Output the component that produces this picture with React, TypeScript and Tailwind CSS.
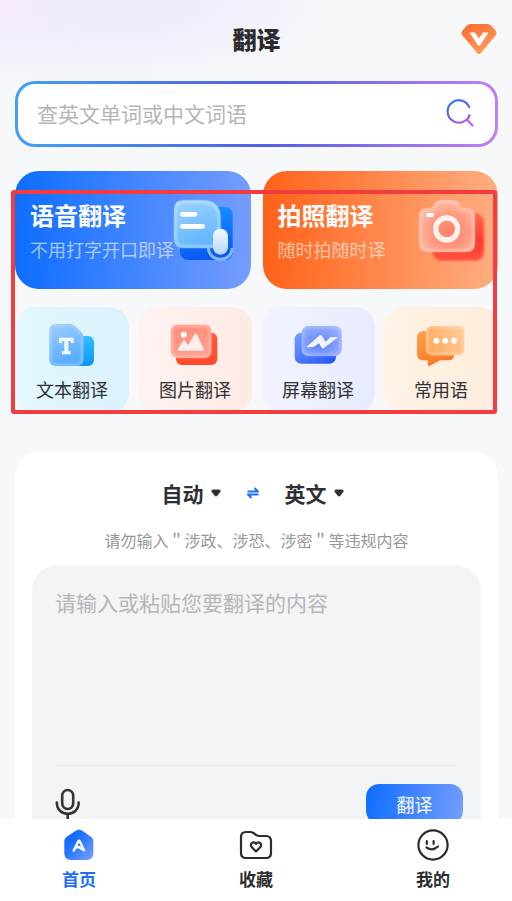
import type { ReactNode } from "react";

const cardTitle = "text-[24px] leading-8 font-bold text-white";

function GradientDefs() {
  return (
    <svg width="0" height="0" className="absolute" aria-hidden="true">
      <defs>
        <filter id="soft" x="-10%" y="-10%" width="120%" height="120%">
          <feGaussianBlur stdDeviation="3" />
        </filter>
        <linearGradient id="gem" x1="0" y1="0" x2="0.5" y2="1">
          <stop offset="0" stopColor="#f9692c" />
          <stop offset="1" stopColor="#ff9c5c" />
        </linearGradient>
        <linearGradient id="search" gradientUnits="userSpaceOnUse" x1="6" y1="2" x2="20" y2="26">
          <stop offset="0" stopColor="#2a7bea" />
          <stop offset="0.5" stopColor="#6a63ea" />
          <stop offset="1" stopColor="#c267e0" />
        </linearGradient>
        <linearGradient id="voiceBack" x1="0.4" y1="0" x2="0.6" y2="1">
          <stop offset="0" stopColor="#1493ff" />
          <stop offset="1" stopColor="#0b55f2" />
        </linearGradient>
        <linearGradient id="voiceFront" x1="0" y1="0" x2="0.3" y2="1">
          <stop offset="0" stopColor="#9fd4ff" />
          <stop offset="1" stopColor="#62b6fe" />
        </linearGradient>
        <linearGradient id="micFill" x1="0" y1="0" x2="0" y2="1">
          <stop offset="0" stopColor="#f4faff" />
          <stop offset="1" stopColor="#b4d6ff" />
        </linearGradient>
        <linearGradient id="camBack" x1="0.5" y1="0" x2="0.5" y2="1">
          <stop offset="0" stopColor="#ff6a4c" />
          <stop offset="0.6" stopColor="#ff3a30" />
          <stop offset="1" stopColor="#ff5440" />
        </linearGradient>
        <radialGradient id="camFront" cx="0.55" cy="0.62" r="0.65">
          <stop offset="0" stopColor="#ff7d66" />
          <stop offset="0.55" stopColor="#ff9c84" />
          <stop offset="1" stopColor="#ffbea6" />
        </radialGradient>
        <linearGradient id="docBack" x1="0" y1="0" x2="0" y2="1">
          <stop offset="0" stopColor="#35bdff" />
          <stop offset="1" stopColor="#0a93fb" />
        </linearGradient>
        <linearGradient id="docFront" x1="0" y1="0" x2="0.3" y2="1">
          <stop offset="0" stopColor="#a3cbff" />
          <stop offset="1" stopColor="#56adff" />
        </linearGradient>
        <linearGradient id="imgBack" x1="0" y1="0" x2="0" y2="1">
          <stop offset="0" stopColor="#ff5b38" />
          <stop offset="1" stopColor="#fb4a2b" />
        </linearGradient>
        <linearGradient id="imgFront" x1="0" y1="0" x2="0.3" y2="1">
          <stop offset="0" stopColor="#ff8a79" />
          <stop offset="1" stopColor="#ff9f8f" />
        </linearGradient>
        <linearGradient id="scrBack" x1="0" y1="0" x2="1" y2="1">
          <stop offset="0" stopColor="#7a9cfb" />
          <stop offset="1" stopColor="#1f55f5" />
        </linearGradient>
        <radialGradient id="scrFront" cx="0.45" cy="0.6" r="0.75">
          <stop offset="0" stopColor="#5d83fb" />
          <stop offset="1" stopColor="#a0b6fd" />
        </radialGradient>
        <linearGradient id="chatBack" x1="0" y1="0" x2="0.6" y2="1">
          <stop offset="0" stopColor="#ffa04c" />
          <stop offset="1" stopColor="#fb7722" />
        </linearGradient>
        <linearGradient id="chatFront" x1="0" y1="0.6" x2="1" y2="0.2">
          <stop offset="0" stopColor="#ffab62" />
          <stop offset="1" stopColor="#ffcb98" />
        </linearGradient>
        <linearGradient id="home" x1="0.3" y1="0.3" x2="1" y2="1">
          <stop offset="0" stopColor="#146dff" />
          <stop offset="1" stopColor="#7aa0ff" />
        </linearGradient>
      </defs>
    </svg>
  );
}

function VoiceIcon() {
  return (
    <svg viewBox="516 117 192 192" className="size-16 shrink-0" aria-hidden="true">
      <rect x="540" y="141" width="158" height="159" rx="24" fill="url(#voiceBack)" />
      <path
        d="M550 121H607Q662 121 662 176V236Q662 264 634 264H550Q522 264 522 236V149Q522 121 550 121Z"
        fill="url(#voiceFront)"
      />
      <path
        d="M551 126H607Q657 126 657 176V235Q657 259 633 259H551Q527 259 527 235V150Q527 126 551 126Z"
        fill="none"
        stroke="#c6e6ff"
        strokeWidth="7"
        strokeOpacity="0.7"
        filter="url(#soft)"
      />
      <path d="M547 163H585M547 199H608" stroke="#fff" strokeWidth="14" strokeLinecap="round" />
      <path d="M625 264A36 34 0 0 0 697 264" fill="none" stroke="#83bcff" strokeWidth="9" />
      <rect x="639" y="206" width="45" height="78" rx="22" fill="url(#micFill)" />
    </svg>
  );
}

function CameraIcon() {
  return (
    <svg viewBox="489 117 192 192" className="size-16 shrink-0 overflow-visible" aria-hidden="true">
      <rect x="530" y="160" width="154" height="142" rx="26" fill="url(#camBack)" filter="url(#soft)" />
      <path
        d="M515 144H522Q530 144 535 132Q541 120 556 120H590Q604 120 610 132Q616 144 623 144H631Q657 144 657 170V250Q657 276 631 276H515Q489 276 489 250V170Q489 144 515 144Z"
        fill="url(#camFront)"
      />
      <path
        d="M518 149H526Q534 149 540 137Q545 125 558 125H588Q600 125 606 137Q611 149 620 149H628Q652 149 652 173V247Q652 271 628 271H518Q494 271 494 247V173Q494 149 518 149Z"
        fill="none"
        stroke="#ffd0bf"
        strokeWidth="7"
        strokeOpacity="0.6"
        filter="url(#soft)"
      />
      <rect x="510" y="159" width="24" height="12" rx="5" fill="#fff" />
      <circle cx="572" cy="207" r="33" fill="none" stroke="#fff3ee" strokeWidth="16" />
    </svg>
  );
}

function TextIcon() {
  return (
    <svg viewBox="144 84 144 132" className="h-11 w-12" aria-hidden="true">
      <rect x="186" y="123" width="96" height="90" rx="18" fill="url(#docBack)" />
      <path
        d="M168 87H210Q218 87 224 93L243 110Q250 116 250 125V192Q250 213 229 213H168Q148 213 148 192V108Q148 87 168 87Z"
        fill="url(#docFront)"
      />
      <path
        d="M170 91H209Q216 91 221 96L240 113Q246 118 246 126V190Q246 209 227 209H171Q152 209 152 190V110Q152 91 170 91Z"
        fill="none"
        stroke="#b4daff"
        strokeWidth="6"
        strokeOpacity="0.6"
        filter="url(#soft)"
      />
      <path d="M177 128H221V144H213V138H205V168H212V178H186V168H193V138H185V144H177Z" fill="#f2f9ff" />
    </svg>
  );
}

function ImageIcon() {
  return (
    <svg viewBox="513 84 144 132" className="h-11 w-12 overflow-visible" aria-hidden="true">
      <rect x="528" y="113" width="124" height="97" rx="18" fill="url(#imgBack)" />
      <rect x="513" y="89" width="121" height="100" rx="20" fill="url(#imgFront)" />
      <rect x="517" y="93" width="113" height="92" rx="17" fill="none" stroke="#ffc9c0" strokeWidth="6" strokeOpacity="0.7" filter="url(#soft)" />
      <circle cx="551" cy="119" r="9" fill="#fff" />
      <path
        d="M534 162L549 138Q552 134 555 138L565 151L583 118Q587 113 591 118L611 162Q613 167 607 167H537Q531 167 534 162Z"
        fill="#ffeeea"
      />
    </svg>
  );
}

function ScreenIcon() {
  return (
    <svg viewBox="112 84 144 132" className="h-11 w-12" aria-hidden="true">
      <rect x="114" y="113" width="124" height="93" rx="20" fill="url(#scrBack)" />
      <rect x="135" y="93" width="120" height="90" rx="20" fill="url(#scrFront)" />
      <rect x="139" y="97" width="112" height="82" rx="17" fill="none" stroke="#b9c9ff" strokeWidth="6" strokeOpacity="0.6" filter="url(#soft)" />
      <path d="M148 157L189 121H195L207 140L222 126H245L201 160H196L187 145L170 156Z" fill="#f0f4ff" />
    </svg>
  );
}

function PhraseIcon() {
  return (
    <svg viewBox="483 84 144 132" className="h-11 w-12" aria-hidden="true">
      <path
        d="M503 108H575Q595 108 595 128V176Q595 196 575 196H552L522 212Q515 215 515 208V196H503Q483 196 483 176V128Q483 108 503 108Z"
        fill="url(#chatBack)"
      />
      <rect x="510" y="93" width="115" height="88" rx="18" fill="url(#chatFront)" />
      <rect x="514" y="97" width="107" height="80" rx="15" fill="none" stroke="#ffdcb8" strokeWidth="6" strokeOpacity="0.6" filter="url(#soft)" />
      <circle cx="541" cy="137" r="9" fill="#fff" />
      <circle cx="568" cy="137" r="9" fill="#fff" />
      <circle cx="594" cy="137" r="9" fill="#fff" />
    </svg>
  );
}

function HomeIcon() {
  return (
    <svg viewBox="188 234 102 102" className="size-[34px]" aria-hidden="true">
      <path
        d="M228 243Q239 236 250 243L275 260Q282 265 282 274V310Q282 330 262 330H215Q195 330 195 310V274Q195 265 202 260Z"
        fill="url(#home)"
      />
      <path
        d="M223 302L237 274Q239 270 241 274L254 301L238 291L230 293"
        fill="none"
        stroke="#fff"
        strokeWidth="7"
        strokeLinecap="round"
        strokeLinejoin="round"
      />
    </svg>
  );
}

function FavoriteIcon() {
  return (
    <svg
      viewBox="0 0 34 34"
      className="size-[34px]"
      fill="none"
      stroke="#2b2c30"
      strokeWidth="2.2"
      strokeLinecap="round"
      strokeLinejoin="round"
      aria-hidden="true"
    >
      <path d="M7 4H11Q13 4 14.500 5L17 6.800Q18.500 8 20.500 8H27Q32 8 32 13V25Q32 30 27 30H7Q2 30 2 25V9Q2 4 7 4Z" />
      <path d="M17 23.500L12.800 19.200Q11 17 12.800 15Q15 13.300 17 15.800Q19 13.300 21.200 15Q23 17 21.200 19.200Z" />
    </svg>
  );
}

function MineIcon() {
  return (
    <svg
      viewBox="0 0 34 34"
      className="size-[34px]"
      fill="none"
      stroke="#2b2c30"
      strokeWidth="2.2"
      strokeLinecap="round"
      aria-hidden="true"
    >
      <circle cx="17" cy="17" r="14.600" />
      <path d="M10.800 13.200V16M17.600 13.200V16M10.500 19.500Q16.500 23.500 22 18.500" />
    </svg>
  );
}

function Caret() {
  return (
    <svg viewBox="0 0 10 8" className="h-2 w-[10px]" aria-hidden="true">
      <path d="M2 0.500H8Q10.200 0.800 9.300 3L6.300 6.800Q5 8 3.700 6.800L0.700 3Q-0.200 0.800 2 0.500Z" fill="#2f3033" />
    </svg>
  );
}

function FeatureCard({ title, text, tone, icon }: { title: string; text: string; tone: string; icon: ReactNode }) {
  return (
    <button type="button" className={`flex h-[118px] items-start rounded-3xl pt-7 pr-[15px] pl-[15px] text-left ${tone}`}>
      <span className="flex min-w-0 flex-1 flex-col gap-1 whitespace-nowrap">
        <span className={cardTitle}>{title}</span>
        <span className="text-[18px] leading-7 text-white/60">{text}</span>
      </span>
      {icon}
    </button>
  );
}

function Tile({ label, tone, icon }: { label: string; tone: string; icon: ReactNode }) {
  return (
    <button type="button" className={`flex h-[106px] flex-col items-center gap-2 rounded-[20px] pt-4 ${tone}`}>
      {icon}
      <span className="text-[18px] leading-7 whitespace-nowrap text-[#303236]">{label}</span>
    </button>
  );
}

function LanguageSelect({ label, options }: { label: string; options: string[] }) {
  return (
    <label className="relative flex items-center">
      <select
        aria-label={label}
        className="w-[59px] appearance-none bg-transparent text-[21px] leading-8 font-bold text-[#2f3033] outline-none"
      >
        {options.map((option) => (
          <option key={option}>{option}</option>
        ))}
      </select>
      <span className="pointer-events-none absolute right-0">
        <Caret />
      </span>
    </label>
  );
}

function NavItem({ label, icon, active = false }: { label: string; icon: ReactNode; active?: boolean }) {
  return (
    <a
      href="#"
      aria-current={active ? "page" : undefined}
      className={`flex w-[54px] flex-col items-center gap-[5px] text-[17px] leading-6 font-bold ${active ? "text-[#1c6ff5]" : "text-[#2b2c30]"}`}
    >
      {icon}
      {label}
    </a>
  );
}

export default function App() {
  return (
    <div className="flex h-screen flex-col overflow-hidden bg-[#f6f8fa] bg-[radial-gradient(ellipse_150px_90px_at_0%_0%,#f6ebfb,transparent),radial-gradient(ellipse_260px_90px_at_20%_0%,#eae9fb,transparent)] font-['Noto_Sans_CJK_SC',sans-serif]">
      <GradientDefs />
      <main className="min-h-0 flex-1 overflow-hidden pr-[14px] pl-[15px]">
        <header className="relative flex h-[81px] items-center justify-center pb-[3px]">
          <h1 className="text-[24px] leading-8 font-black text-[#2b2b2d]">翻译</h1>
          <button type="button" aria-label="会员" className="absolute right-0">
            <svg viewBox="0 0 38 32" className="h-8 w-[38px]" aria-hidden="true">
              <path
                d="M10.500 1H27.500Q29.500 1 31 2.500L35.500 7.500Q37.500 10 35.500 12.500L20.500 30.500Q19 32 17.500 30.500L2.500 12.500Q0.500 10 2.500 7.500L7 2.500Q8.500 1 10.500 1Z"
                fill="url(#gem)"
              />
              <path d="M9.500 9.500H15L19 15.500L23 9.500H28.500L20 22.500H18Z" fill="#fff" />
            </svg>
          </button>
        </header>

        <form
          className="rounded-[20px] bg-[linear-gradient(90deg,#42a0f3,#535fe4_52%,#c080f0)] p-[3px]"
          onSubmit={(event) => event.preventDefault()}
        >
          <div className="flex h-[60px] items-center rounded-[17px] bg-white pr-[21px] pb-[2px] pl-[19px]">
            <input
              type="text"
              aria-label="查词"
              placeholder="查英文单词或中文词语"
              className="min-w-0 flex-1 bg-transparent text-[21px] leading-8 outline-none placeholder:text-[#b5b5b5]"
            />
            <button type="submit" aria-label="搜索">
              <svg viewBox="0 0 28 28" className="size-7" fill="none" stroke="url(#search)" strokeWidth="2.200" strokeLinecap="round" aria-hidden="true">
                <path d="M23.200 8.200A11.200 11.200 0 1 0 23.600 15.500Q23.600 18.500 20.800 20.500L26.500 26.500" />
              </svg>
            </button>
          </div>
        </form>

        <section className="relative mt-6 flex flex-col gap-[18px]">
          <div className="grid grid-cols-2 gap-3">
            <FeatureCard
              title="语音翻译"
              text="不用打字开口即译"
              tone="bg-[linear-gradient(90deg,#0d6dff,#759dff)]"
              icon={<VoiceIcon />}
            />
            <FeatureCard
              title="拍照翻译"
              text="随时拍随时译"
              tone="bg-[linear-gradient(90deg,#ff6218,#ffae82)]"
              icon={<CameraIcon />}
            />
          </div>
          <div className="grid grid-cols-4 gap-[9px]">
            <Tile label="文本翻译" tone="bg-linear-to-r from-[#e2f8fe] to-[#dbf2fe]" icon={<TextIcon />} />
            <Tile label="图片翻译" tone="bg-linear-to-r from-[#fef3f2] to-[#feeae3]" icon={<ImageIcon />} />
            <Tile label="屏幕翻译" tone="bg-linear-to-r from-[#f1f4ff] to-[#e8ebfe]" icon={<ScreenIcon />} />
            <Tile label="常用语" tone="bg-linear-to-r from-[#fef3e5] to-[#fdecdc]" icon={<PhraseIcon />} />
          </div>
          <div className="pointer-events-none absolute top-[19px] right-px -bottom-px -left-1 rounded-[3px] border-4 border-[#f23c3f]" />
        </section>

        <section className="mt-[39px] rounded-t-3xl bg-white px-[17px] pt-[25px]">
          <div className="flex items-center justify-center gap-[26px] pr-2">
            <LanguageSelect label="源语言" options={["自动", "中文", "英文"]} />
            <button type="button" aria-label="交换语言">
              <svg viewBox="0 0 12 12" className="size-3" fill="none" stroke="#1c6ff5" strokeWidth="2" strokeLinejoin="round" aria-hidden="true">
                <path d="M0.500 4.500H11L7.500 1M11.500 7.500H1L4.500 11" />
              </svg>
            </button>
            <LanguageSelect label="目标语言" options={["英文", "中文"]} />
          </div>
          <p className="mt-[19px] text-center text-[16px] leading-6 whitespace-nowrap text-[#979797]">
            请勿输入＂涉政、涉恐、涉密＂等违规内容
          </p>
          <div className="mt-[14px] rounded-3xl bg-[#f3f4f6] pr-[18px] pl-[23px]">
            <textarea
              aria-label="翻译内容"
              placeholder="请输入或粘贴您要翻译的内容"
              className="block h-[199px] w-full resize-none bg-transparent pt-5 text-[21px] leading-8 outline-none placeholder:text-[#b5b6b8]"
            />
            <div className="mr-[7px] border-t border-[#e9eaec]" />
            <div className="flex items-start justify-between pt-[18px] pb-5">
              <button type="button" aria-label="语音输入" className="pt-1">
                <svg viewBox="0 0 26 32" className="h-8 w-[26px]" fill="none" stroke="#333539" strokeWidth="2.600" strokeLinecap="round" aria-hidden="true">
                  <rect x="7.200" y="2" width="11" height="19" rx="5.500" />
                  <path d="M1.800 14.500C1.800 29.500 23.700 29.500 23.700 14.500M12.700 26V31" />
                </svg>
              </button>
              <button
                type="button"
                className="h-10 w-[97px] rounded-[13px] bg-[linear-gradient(100deg,#0d6dff,#759dff)] text-[18px] leading-7 text-white"
              >
                翻译
              </button>
            </div>
          </div>
        </section>
      </main>

      <nav className="flex h-[82px] shrink-0 justify-between bg-white px-[52px] pt-[9px]">
        <NavItem label="首页" icon={<HomeIcon />} active />
        <NavItem label="收藏" icon={<FavoriteIcon />} />
        <NavItem label="我的" icon={<MineIcon />} />
      </nav>
    </div>
  );
}
